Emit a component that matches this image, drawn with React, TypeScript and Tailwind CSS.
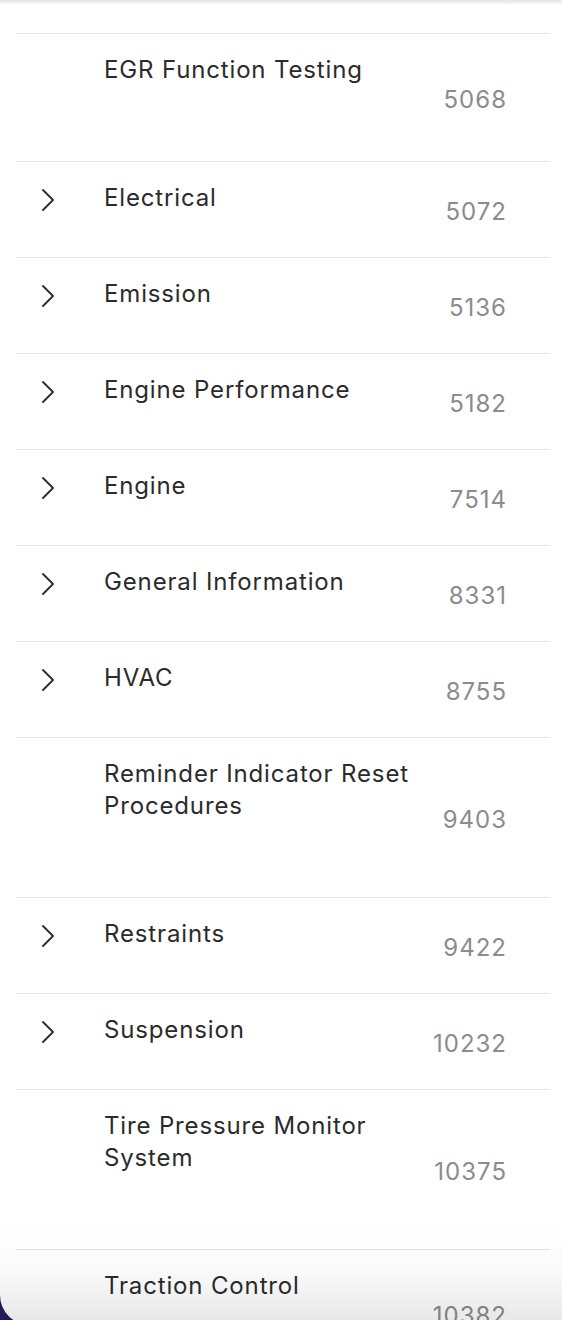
import React from "react";

type Item = {
  title: string;
  count: number;
  // rows with children show a chevron; leaf rows are taller
  hasChildren: boolean;
};

const ITEMS: Item[] = [
  { title: "EGR Function Testing", count: 5068, hasChildren: false },
  { title: "Electrical", count: 5072, hasChildren: true },
  { title: "Emission", count: 5136, hasChildren: true },
  { title: "Engine Performance", count: 5182, hasChildren: true },
  { title: "Engine", count: 7514, hasChildren: true },
  { title: "General Information", count: 8331, hasChildren: true },
  { title: "HVAC", count: 8755, hasChildren: true },
  { title: "Reminder Indicator Reset Procedures", count: 9403, hasChildren: false },
  { title: "Restraints", count: 9422, hasChildren: true },
  { title: "Suspension", count: 10232, hasChildren: true },
  { title: "Tire Pressure Monitor System", count: 10375, hasChildren: false },
  { title: "Traction Control", count: 10382, hasChildren: false },
];

function Chevron() {
  return (
    <svg width="16" height="24" viewBox="0 0 16 24" fill="none" className="text-[#333333]">
      <polyline
        points="3,2 13,12 3,22"
        stroke="currentColor"
        strokeWidth="2"
        strokeLinecap="round"
        strokeLinejoin="round"
      />
    </svg>
  );
}

function Row({ item }: { item: Item }) {
  return (
    <div className="flex border-t border-[#e6e6e6]">
      <div className="w-[88px] shrink-0 pl-[24px] pt-[26px]">
        {item.hasChildren && <Chevron />}
      </div>
      <div className="flex-1 min-w-0 pt-[20px] pb-[43px]">
        <p className="text-[24px] leading-[32px] tracking-[0.85px] text-[#2b2b2b] max-w-[330px]">
          {item.title}
        </p>
        {!item.hasChildren && <div className="h-8" />}
      </div>
      <div className="self-center mt-1 pr-[43px] pl-4 text-[24px] leading-[32px] tracking-[1px] text-[#8c8c8c]">
        {item.count}
      </div>
    </div>
  );
}

export default function App() {
  return (
    <div
      className="relative h-[1320px] w-[562px] overflow-hidden bg-[#2a1a63]"
      style={{ fontFamily: "Inter, 'Noto Sans', sans-serif" }}
    >
      <div className="h-[1325px] rounded-bl-[30px] bg-white overflow-hidden">
        <div className="h-[4px] bg-gradient-to-b from-[#e6e6e6] to-[#f6f6f6]" />
        <div className="pt-[29px] pl-4 pr-3">
          {ITEMS.map((item) => (
            <Row key={item.title} item={item} />
          ))}
        </div>
      </div>
      <div className="pointer-events-none absolute bottom-0 left-0 right-0 h-[100px] bg-gradient-to-b from-transparent via-[#000000]/[0.02] to-[#000000]/[0.09]" />
    </div>
  );
}
